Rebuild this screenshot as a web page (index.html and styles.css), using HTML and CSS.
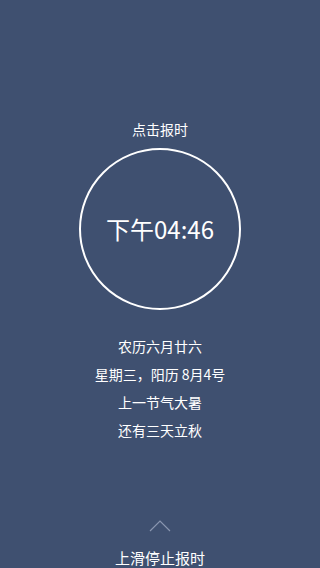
FILE: index.html
```html
<!DOCTYPE html>
<html>
  <head>
    <meta charset="utf-8">
    <title>报时</title>
    <link rel="stylesheet" href="styles.css">
  </head>
  <body>
    <div class="screen">
      <div class="hint">点击报时</div>
      <div class="clock">
        <span class="time">下午04:46</span>
      </div>

      <div class="info">
        <div>农历六月廿六</div>
        <div>星期三，阳历 8月4号</div>
        <div>上一节气大暑</div>
        <div>还有三天立秋</div>
      </div>

      <div class="swipe">
        <svg class="arrow" width="22" height="12" viewBox="0 0 22 12">
          <polyline points="1,11 11,1 21,11" fill="none" stroke="#8a96b0" stroke-width="1.2"/>
        </svg>
        <div class="swipe-text">上滑停止报时</div>
      </div>
    </div>
  </body>
</html>
```

FILE: styles.css
```css
:root {
  --bg-color: #3f5070;
  --text-color: #ffffff;
}

html,
body {
  margin: 0;
  height: 100%;
}

body {
  background-color: var(--bg-color);
  color: var(--text-color);
  font-family: "Noto Sans CJK SC", "Noto Sans", sans-serif;
  overflow: hidden;
}

.screen {
  height: 568px;
  display: flex;
  flex-direction: column;
  align-items: center;
  padding-top: 119px;
  box-sizing: border-box;
}

.hint {
  font-size: 14px;
  line-height: 20px;
}

.clock {
  margin-top: 9px;
  width: 162px;
  height: 162px;
  border: 2.5px solid #fff;
  border-radius: 50%;
  box-sizing: border-box;
  display: flex;
  align-items: center;
  justify-content: center;
}

.time {
  font-size: 24px;
  line-height: 30px;
  font-family: "Noto Sans CJK SC", "Roboto", sans-serif;
}

.info {
  margin-top: 22px;
  text-align: center;
  font-size: 14px;
  line-height: 28px;
}

.swipe {
  margin-top: auto;
  display: flex;
  flex-direction: column;
  align-items: center;
}

.arrow {
  display: block;
  margin-bottom: 16px;
}

.swipe-text {
  font-size: 15px;
  line-height: 20px;
  margin-bottom: 0;
}
```
